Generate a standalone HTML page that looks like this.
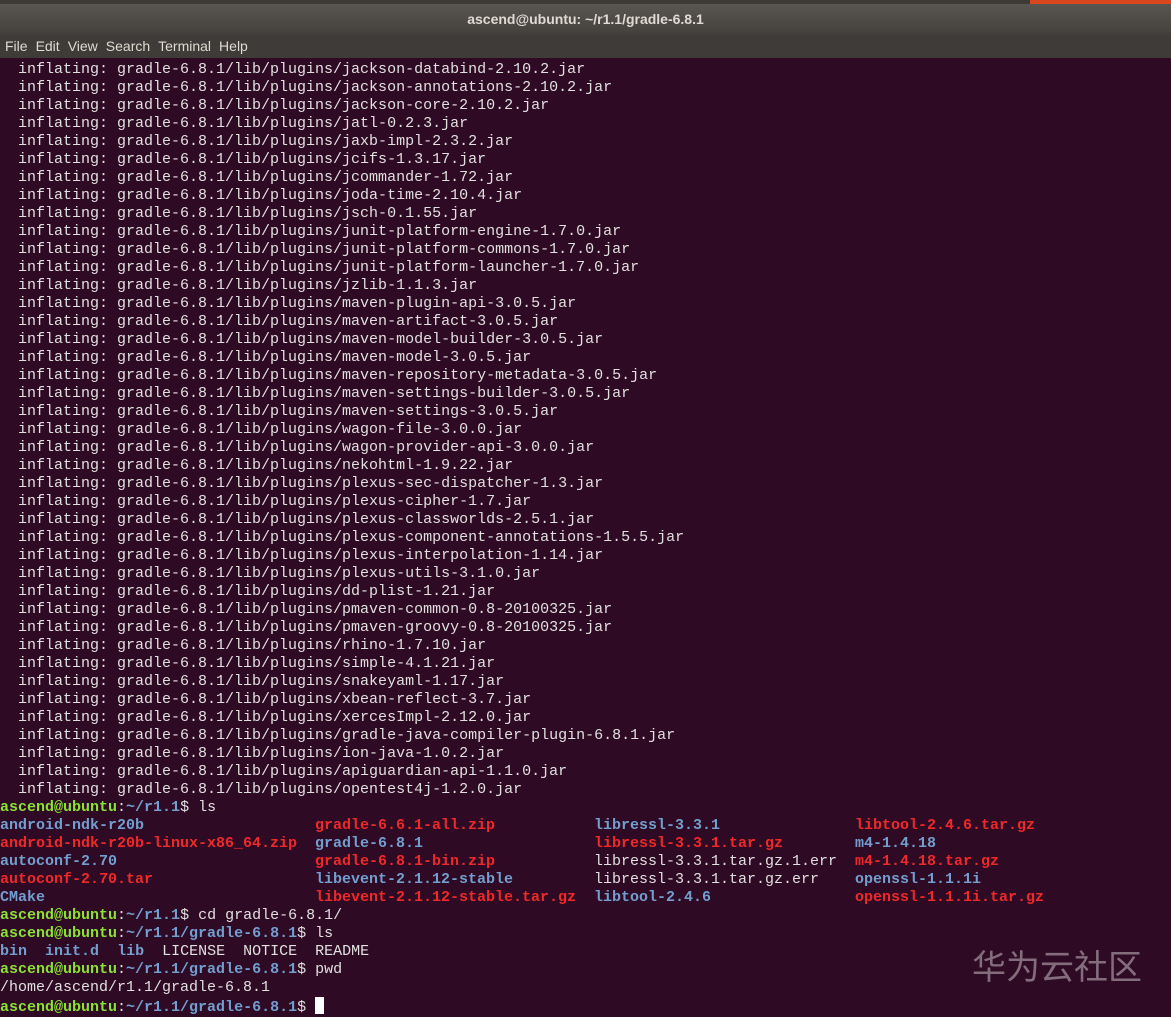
<!DOCTYPE html>
<html><head><meta charset="utf-8"><style>
html,body{margin:0;padding:0;width:1171px;height:1015px;overflow:hidden;background:#2f0a24;}
#top{position:absolute;left:0;top:0;width:1171px;height:4px;background:#3c3b37;}
#orange{position:absolute;left:1030px;top:0;width:141px;height:4px;background:#d9481c;}
#title{position:absolute;left:0;top:4px;width:1171px;height:31px;background:linear-gradient(#5a5752,#433f3c);color:#dfdbd2;font:bold 14px "Liberation Sans",sans-serif;text-align:center;line-height:31px;}
#menu{position:absolute;left:0;top:35px;width:1171px;height:23px;background:#3e3b39;color:#dfdbd2;font:14px "Liberation Sans",sans-serif;line-height:23px;}
#menu span{margin-left:5px;margin-right:3px;}
pre{position:absolute;left:0;top:61px;margin:0;font:15px/18px "Liberation Mono",monospace;color:#e0e0de;white-space:pre;}
.g{color:#8ae234;font-weight:bold}.b{color:#729fcf;font-weight:bold}.r{color:#ef2929;font-weight:bold}
.c1,.c2,.c3{display:inline-block}
.c1{width:315px}.c2{width:279px}.c3{width:261px}
.cur{display:inline-block;width:9px;height:17px;background:#fff;vertical-align:-3px}
#wm{position:absolute;left:972px;top:940px;font:34px "Noto Sans CJK SC",sans-serif;color:rgba(200,190,195,0.55);}
</style></head><body>
<div id="top"></div><div id="orange"></div>
<div id="title">ascend@ubuntu: ~/r1.1/gradle-6.8.1</div>
<div id="menu"><span>File</span><span>Edit</span><span>View</span><span>Search</span><span>Terminal</span><span>Help</span></div>
<pre>  inflating: gradle-6.8.1/lib/plugins/jackson-databind-2.10.2.jar
  inflating: gradle-6.8.1/lib/plugins/jackson-annotations-2.10.2.jar
  inflating: gradle-6.8.1/lib/plugins/jackson-core-2.10.2.jar
  inflating: gradle-6.8.1/lib/plugins/jatl-0.2.3.jar
  inflating: gradle-6.8.1/lib/plugins/jaxb-impl-2.3.2.jar
  inflating: gradle-6.8.1/lib/plugins/jcifs-1.3.17.jar
  inflating: gradle-6.8.1/lib/plugins/jcommander-1.72.jar
  inflating: gradle-6.8.1/lib/plugins/joda-time-2.10.4.jar
  inflating: gradle-6.8.1/lib/plugins/jsch-0.1.55.jar
  inflating: gradle-6.8.1/lib/plugins/junit-platform-engine-1.7.0.jar
  inflating: gradle-6.8.1/lib/plugins/junit-platform-commons-1.7.0.jar
  inflating: gradle-6.8.1/lib/plugins/junit-platform-launcher-1.7.0.jar
  inflating: gradle-6.8.1/lib/plugins/jzlib-1.1.3.jar
  inflating: gradle-6.8.1/lib/plugins/maven-plugin-api-3.0.5.jar
  inflating: gradle-6.8.1/lib/plugins/maven-artifact-3.0.5.jar
  inflating: gradle-6.8.1/lib/plugins/maven-model-builder-3.0.5.jar
  inflating: gradle-6.8.1/lib/plugins/maven-model-3.0.5.jar
  inflating: gradle-6.8.1/lib/plugins/maven-repository-metadata-3.0.5.jar
  inflating: gradle-6.8.1/lib/plugins/maven-settings-builder-3.0.5.jar
  inflating: gradle-6.8.1/lib/plugins/maven-settings-3.0.5.jar
  inflating: gradle-6.8.1/lib/plugins/wagon-file-3.0.0.jar
  inflating: gradle-6.8.1/lib/plugins/wagon-provider-api-3.0.0.jar
  inflating: gradle-6.8.1/lib/plugins/nekohtml-1.9.22.jar
  inflating: gradle-6.8.1/lib/plugins/plexus-sec-dispatcher-1.3.jar
  inflating: gradle-6.8.1/lib/plugins/plexus-cipher-1.7.jar
  inflating: gradle-6.8.1/lib/plugins/plexus-classworlds-2.5.1.jar
  inflating: gradle-6.8.1/lib/plugins/plexus-component-annotations-1.5.5.jar
  inflating: gradle-6.8.1/lib/plugins/plexus-interpolation-1.14.jar
  inflating: gradle-6.8.1/lib/plugins/plexus-utils-3.1.0.jar
  inflating: gradle-6.8.1/lib/plugins/dd-plist-1.21.jar
  inflating: gradle-6.8.1/lib/plugins/pmaven-common-0.8-20100325.jar
  inflating: gradle-6.8.1/lib/plugins/pmaven-groovy-0.8-20100325.jar
  inflating: gradle-6.8.1/lib/plugins/rhino-1.7.10.jar
  inflating: gradle-6.8.1/lib/plugins/simple-4.1.21.jar
  inflating: gradle-6.8.1/lib/plugins/snakeyaml-1.17.jar
  inflating: gradle-6.8.1/lib/plugins/xbean-reflect-3.7.jar
  inflating: gradle-6.8.1/lib/plugins/xercesImpl-2.12.0.jar
  inflating: gradle-6.8.1/lib/plugins/gradle-java-compiler-plugin-6.8.1.jar
  inflating: gradle-6.8.1/lib/plugins/ion-java-1.0.2.jar
  inflating: gradle-6.8.1/lib/plugins/apiguardian-api-1.1.0.jar
  inflating: gradle-6.8.1/lib/plugins/opentest4j-1.2.0.jar
<span class="g">ascend@ubuntu</span>:<span class="b">~/r1.1</span>$ ls
<span class="c1 b">android-ndk-r20b</span><span class="c2 r">gradle-6.6.1-all.zip</span><span class="c3 b">libressl-3.3.1</span><span class="r">libtool-2.4.6.tar.gz</span>
<span class="c1 r">android-ndk-r20b-linux-x86_64.zip</span><span class="c2 b">gradle-6.8.1</span><span class="c3 r">libressl-3.3.1.tar.gz</span><span class="b">m4-1.4.18</span>
<span class="c1 b">autoconf-2.70</span><span class="c2 r">gradle-6.8.1-bin.zip</span><span class="c3">libressl-3.3.1.tar.gz.1.err</span><span class="r">m4-1.4.18.tar.gz</span>
<span class="c1 r">autoconf-2.70.tar</span><span class="c2 b">libevent-2.1.12-stable</span><span class="c3">libressl-3.3.1.tar.gz.err</span><span class="b">openssl-1.1.1i</span>
<span class="c1 b">CMake</span><span class="c2 r">libevent-2.1.12-stable.tar.gz</span><span class="c3 b">libtool-2.4.6</span><span class="r">openssl-1.1.1i.tar.gz</span>
<span class="g">ascend@ubuntu</span>:<span class="b">~/r1.1</span>$ cd gradle-6.8.1/
<span class="g">ascend@ubuntu</span>:<span class="b">~/r1.1/gradle-6.8.1</span>$ ls
<span class="b">bin</span>  <span class="b">init.d</span>  <span class="b">lib</span>  LICENSE  NOTICE  README
<span class="g">ascend@ubuntu</span>:<span class="b">~/r1.1/gradle-6.8.1</span>$ pwd
/home/ascend/r1.1/gradle-6.8.1
<span class="g">ascend@ubuntu</span>:<span class="b">~/r1.1/gradle-6.8.1</span>$ <span class="cur"></span></pre>
<div id="wm">华为云社区</div>
</body></html>
